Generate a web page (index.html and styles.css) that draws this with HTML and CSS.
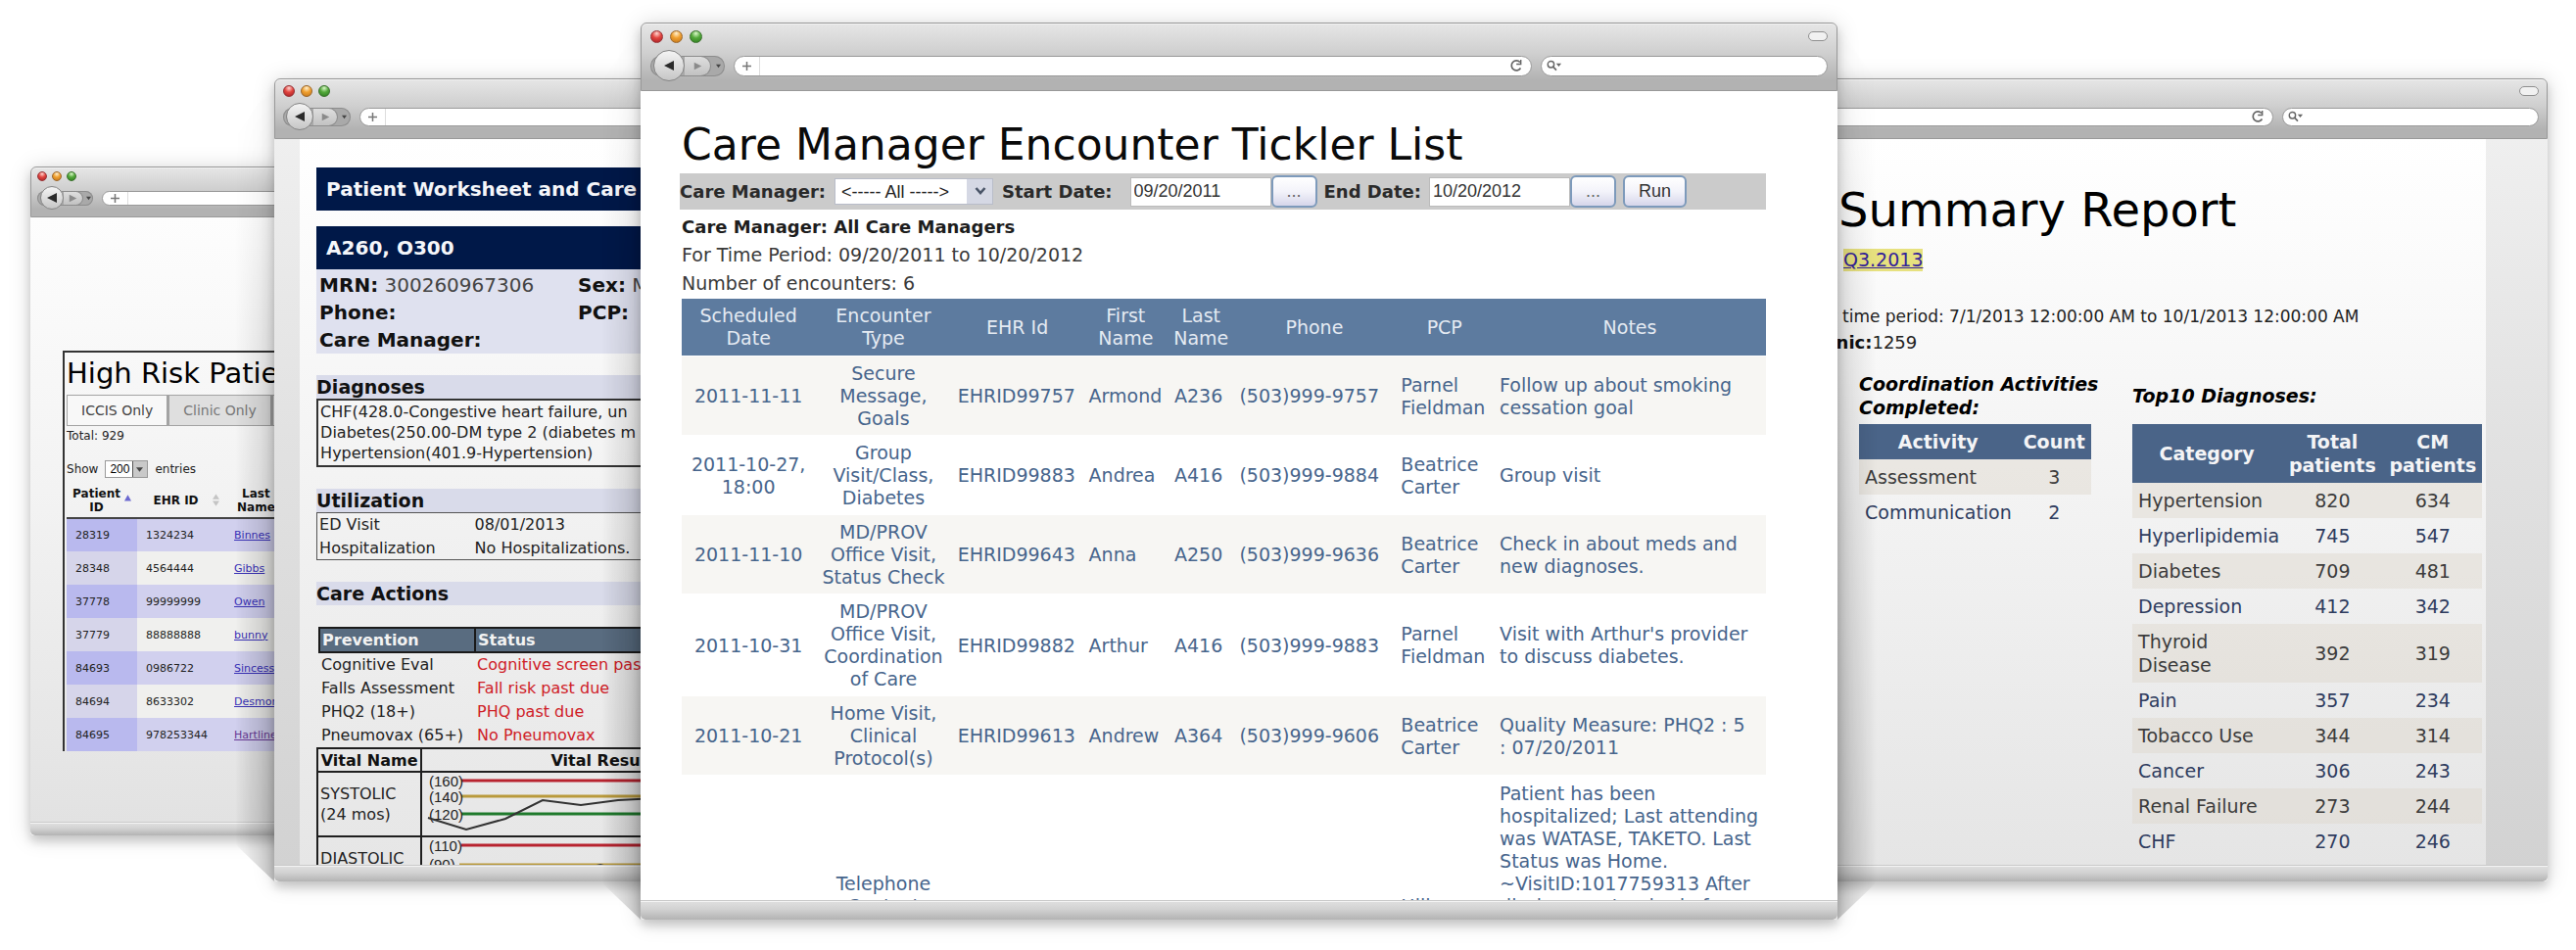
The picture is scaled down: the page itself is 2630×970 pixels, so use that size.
FILE: index.html
```html
<!DOCTYPE html>
<html lang="en">

<head>
    <meta charset="UTF-8">
    <meta name="viewport" content="width=device-width, initial-scale=1.0">
    <title>Care Manager Encounter Tickler List</title>
    <link rel="stylesheet" href="styles.css">
</head>

<body>
    <!-- shared icons -->
    <svg class="defs" aria-hidden="true">
        <symbol id="i-back" viewBox="0 0 12 12"><path d="M11 1v10L1 6z" fill="#2b2b2b"/></symbol>
        <symbol id="i-fwd" viewBox="0 0 12 12"><path d="M1 1v10l10-5z" fill="#8a8a8a"/></symbol>
        <symbol id="i-down" viewBox="0 0 12 12"><path d="M0 2h12L6 10z" fill="#444"/></symbol>
        <symbol id="i-plus" viewBox="0 0 12 12"><path d="M6 0v12M0 6h12" stroke="#777" stroke-width="2" fill="none"/></symbol>
        <symbol id="i-reload" viewBox="0 0 14 14"><path d="M11.500 9.500a5 5 0 1 1-.6-6" stroke="#666" stroke-width="1.700" fill="none"/><path d="M12.400 1v5.200H7.200V4.800H11V1z" fill="#666"/></symbol>
        <symbol id="i-search" viewBox="0 0 18 12"><circle cx="5" cy="4.600" r="3.600" stroke="#666" stroke-width="1.600" fill="none"/><path d="M7.600 7.400l3.600 3.800" stroke="#666" stroke-width="2"/><path d="M11 3.600h6l-3 3.600z" fill="#666"/></symbol>
        <symbol id="i-chev" viewBox="0 0 12 12"><path d="M1.500 3L6 8l4.500-5" stroke="#4a5568" stroke-width="2.600" fill="none"/></symbol>
    </svg>

    <main class="desktop">

        <!-- high risk patients -->
        <section class="window win-risk">
            <header class="chrome">
                <div class="titlebar"><i class="light red"></i><i class="light amber"></i><i class="light green"></i></div>
                <div class="navbar">
                    <div class="nav">
                        <button class="back" aria-label="Back"><svg><use href="#i-back"/></svg></button>
                        <button class="fwd" aria-label="Forward"><svg><use href="#i-fwd"/></svg></button>
                        <button class="drop" aria-label="History"><svg><use href="#i-down"/></svg></button>
                    </div>
                    <div class="field url"><svg class="plus"><use href="#i-plus"/></svg><input type="text" aria-label="Address"></div>
                </div>
            </header>
            <div class="view">
                <div class="risk-box">
                    <h2>High Risk Patients</h2>
                    <div class="tabs">
                        <button class="tab active">ICCIS Only</button>
                        <button class="tab">Clinic Only</button>
                        <button class="tab">All</button>
                    </div>
                    <p class="total">Total: 929</p>
                    <p class="show">
                        <label for="len">Show</label>
                        <span class="pick"><select id="len"><option>200</option></select><svg><use href="#i-down"/></svg></span>
                        entries
                    </p>
                    <table class="risk">
                        <thead>
                            <tr>
                                <th><span>Patient<br>ID</span><svg class="sort" viewBox="0 0 8 14"><path d="M0 8h8L4 1z" fill="#6a68d0"/></svg></th>
                                <th><span>EHR ID</span><svg class="sort both" viewBox="0 0 8 14"><path d="M0 6h8L4 0zM0 8h8l-4 6z" fill="#c4c4c4"/></svg></th>
                                <th><span>Last<br>Name</span></th>
                            </tr>
                        </thead>
                        <tbody>
                            <tr><td>28319</td><td>1324234</td><td><a href="#">Binnes</a></td></tr>
                            <tr><td>28348</td><td>4564444</td><td><a href="#">Gibbs</a></td></tr>
                            <tr><td>37778</td><td>99999999</td><td><a href="#">Owen</a></td></tr>
                            <tr><td>37779</td><td>88888888</td><td><a href="#">bunny</a></td></tr>
                            <tr><td>84693</td><td>0986722</td><td><a href="#">Sincess</a></td></tr>
                            <tr><td>84694</td><td>8633302</td><td><a href="#">Desmond</a></td></tr>
                            <tr><td>84695</td><td>978253344</td><td><a href="#" class="visited">Hartline</a></td></tr>
                        </tbody>
                    </table>
                </div>
            </div>
            <div class="lip"></div>
        </section>

        <!-- patient worksheet -->
        <section class="window win-sheet">
            <header class="chrome">
                <div class="titlebar"><i class="light red"></i><i class="light amber"></i><i class="light green"></i></div>
                <div class="navbar">
                    <div class="nav">
                        <button class="back" aria-label="Back"><svg><use href="#i-back"/></svg></button>
                        <button class="fwd" aria-label="Forward"><svg><use href="#i-fwd"/></svg></button>
                        <button class="drop" aria-label="History"><svg><use href="#i-down"/></svg></button>
                    </div>
                    <div class="field url"><svg class="plus"><use href="#i-plus"/></svg><input type="text" aria-label="Address"></div>
                </div>
            </header>
            <div class="view">
                <div class="sheet">
                    <h2 class="navy">Patient Worksheet and Care Plan</h2>
                    <h2 class="navy">A260, O300</h2>
                    <div class="info">
                        <div><b>MRN:</b> 300260967306</div>
                        <div><b>Sex:</b> M</div>
                        <div><b>Phone:</b></div>
                        <div><b>PCP:</b></div>
                        <div><b>Care Manager:</b></div>
                    </div>

                    <h3>Diagnoses</h3>
                    <div class="dx">
                        <div>CHF(428.0-Congestive heart failure, un</div>
                        <div>Diabetes(250.00-DM type 2 (diabetes m</div>
                        <div>Hypertension(401.9-Hypertension)</div>
                    </div>

                    <h3>Utilization</h3>
                    <table class="util">
                        <tr><td>ED Visit</td><td>08/01/2013</td></tr>
                        <tr><td>Hospitalization</td><td>No Hospitalizations.</td></tr>
                    </table>

                    <h3>Care Actions</h3>
                    <table class="prev">
                        <tr><th>Prevention</th><th>Status</th></tr>
                        <tr><td>Cognitive Eval</td><td>Cognitive screen past due</td></tr>
                        <tr><td>Falls Assessment</td><td>Fall risk past due</td></tr>
                        <tr><td>PHQ2 (18+)</td><td>PHQ past due</td></tr>
                        <tr><td>Pneumovax (65+)</td><td>No Pneumovax</td></tr>
                    </table>

                    <table class="vital">
                        <tr><th>Vital Name</th><th>Vital Results</th></tr>
                        <tr>
                            <td>SYSTOLIC<br>(24 mos)</td>
                            <td>
                                <svg width="376" height="64">
                                    <path d="M40 8H376" stroke="#b8232f" stroke-width="3"/>
                                    <path d="M40 24H376" stroke="#b99a3c" stroke-width="3"/>
                                    <path d="M40 42H376" stroke="#1f7a2c" stroke-width="3"/>
                                    <text x="7" y="14">(160)</text>
                                    <text x="7" y="30">(140)</text>
                                    <text x="7" y="48">(120)</text>
                                    <polyline points="6,46 45,58 85,47 123,28 162,33 200,28 240,26 376,26" fill="none" stroke="#333" stroke-width="2"/>
                                </svg>
                            </td>
                        </tr>
                        <tr>
                            <td>DIASTOLIC<br>(24 mos)</td>
                            <td>
                                <svg width="376" height="64">
                                    <path d="M40 8H376" stroke="#b8232f" stroke-width="3"/>
                                    <path d="M38 28H376" stroke="#b99a3c" stroke-width="3"/>
                                    <text x="7" y="14">(110)</text>
                                    <text x="7" y="33">(90)</text>
                                    <polyline points="150,36 182,28 210,36" fill="none" stroke="#333" stroke-width="2"/>
                                </svg>
                            </td>
                        </tr>
                    </table>
                </div>
            </div>
            <div class="lip"></div>
        </section>

        <!-- summary report -->
        <section class="window win-report">
            <header class="chrome">
                <div class="titlebar"><i class="pill"></i></div>
                <div class="navbar">
                    <div class="field url"><input type="text" aria-label="Address"><svg class="reload"><use href="#i-reload"/></svg></div>
                    <div class="field search"><svg class="glass"><use href="#i-search"/></svg><input type="text" aria-label="Search"></div>
                </div>
            </header>
            <div class="view">
                <div class="report">
                    <h1>Summary Report</h1>
                    <a href="#" class="quarter">Q3.2013</a>
                    <p class="period">For time period: 7/1/2013 12:00:00 AM to 10/1/2013 12:00:00 AM</p>
                    <p class="clinic"><b>Clinic:</b>1259</p>
                    <div class="pair">
                        <div>
                            <h3>Coordination Activities<br>Completed:</h3>
                            <table class="stats activity">
                                <tr><th>Activity</th><th>Count</th></tr>
                                <tr><td>Assessment</td><td>3</td></tr>
                                <tr><td>Communication</td><td>2</td></tr>
                            </table>
                        </div>
                        <div>
                            <h3>Top10 Diagnoses:</h3>
                            <table class="stats top">
                                <tr><th>Category</th><th>Total patients</th><th>CM patients</th></tr>
                                <tr><td>Hypertension</td><td>820</td><td>634</td></tr>
                                <tr><td>Hyperlipidemia</td><td>745</td><td>547</td></tr>
                                <tr><td>Diabetes</td><td>709</td><td>481</td></tr>
                                <tr><td>Depression</td><td>412</td><td>342</td></tr>
                                <tr><td>Thyroid<br>Disease</td><td>392</td><td>319</td></tr>
                                <tr><td>Pain</td><td>357</td><td>234</td></tr>
                                <tr><td>Tobacco Use</td><td>344</td><td>314</td></tr>
                                <tr><td>Cancer</td><td>306</td><td>243</td></tr>
                                <tr><td>Renal Failure</td><td>273</td><td>244</td></tr>
                                <tr><td>CHF</td><td>270</td><td>246</td></tr>
                            </table>
                        </div>
                    </div>
                </div>
            </div>
            <div class="lip"></div>
        </section>

        <!-- tickler list -->
        <section class="window win-tickler">
            <header class="chrome">
                <div class="titlebar"><i class="light red"></i><i class="light amber"></i><i class="light green"></i><i class="pill"></i></div>
                <div class="navbar">
                    <div class="nav">
                        <button class="back" aria-label="Back"><svg><use href="#i-back"/></svg></button>
                        <button class="fwd" aria-label="Forward"><svg><use href="#i-fwd"/></svg></button>
                        <button class="drop" aria-label="History"><svg><use href="#i-down"/></svg></button>
                    </div>
                    <div class="field url"><svg class="plus"><use href="#i-plus"/></svg><input type="text" aria-label="Address"><svg class="reload"><use href="#i-reload"/></svg></div>
                    <div class="field search"><svg class="glass"><use href="#i-search"/></svg><input type="text" aria-label="Search"></div>
                </div>
            </header>
            <div class="view">
                <div class="tickler">
                    <h1>Care Manager Encounter Tickler List</h1>
                    <form class="filters">
                        <label for="cm">Care Manager:</label>
                        <span class="pick"><select id="cm"><option>&lt;----- All -----&gt;</option></select><svg><use href="#i-chev"/></svg></span>
                        <label for="start">Start Date:</label>
                        <div class="date"><input type="text" id="start" value="09/20/2011"><button type="button">...</button></div>
                        <label for="end">End Date:</label>
                        <div class="date"><input type="text" id="end" value="10/20/2012"><button type="button">...</button></div>
                        <button type="button" class="run">Run</button>
                    </form>
                    <div class="summary">
                        <p><b>Care Manager: All Care Managers</b></p>
                        <p>For Time Period: 09/20/2011 to 10/20/2012</p>
                        <p>Number of encounters: 6</p>
                    </div>
                    <table class="encounters">
                        <colgroup>
                            <col class="c-date"><col class="c-type"><col class="c-ehr"><col class="c-first"><col class="c-last"><col class="c-phone"><col class="c-pcp"><col class="c-notes">
                        </colgroup>
                        <thead>
                            <tr><th>Scheduled<br>Date</th><th>Encounter<br>Type</th><th>EHR Id</th><th>First<br>Name</th><th>Last<br>Name</th><th>Phone</th><th>PCP</th><th>Notes</th></tr>
                        </thead>
                        <tbody>
                            <tr><td>2011-11-11</td><td>Secure<br>Message,<br>Goals</td><td>EHRID99757</td><td>Armond</td><td>A236</td><td>(503)999-9757</td><td>Parnel<br>Fieldman</td><td>Follow up about smoking<br>cessation goal</td></tr>
                            <tr><td>2011-10-27,<br>18:00</td><td>Group<br>Visit/Class,<br>Diabetes</td><td>EHRID99883</td><td>Andrea</td><td>A416</td><td>(503)999-9884</td><td>Beatrice<br>Carter</td><td>Group visit</td></tr>
                            <tr><td>2011-11-10</td><td>MD/PROV<br>Office Visit,<br>Status Check</td><td>EHRID99643</td><td>Anna</td><td>A250</td><td>(503)999-9636</td><td>Beatrice<br>Carter</td><td>Check in about meds and<br>new diagnoses.</td></tr>
                            <tr><td>2011-10-31</td><td>MD/PROV<br>Office Visit,<br>Coordination<br>of Care</td><td>EHRID99882</td><td>Arthur</td><td>A416</td><td>(503)999-9883</td><td>Parnel<br>Fieldman</td><td>Visit with Arthur's provider<br>to discuss diabetes.</td></tr>
                            <tr><td>2011-10-21</td><td>Home Visit,<br>Clinical<br>Protocol(s)</td><td>EHRID99613</td><td>Andrew</td><td>A364</td><td>(503)999-9606</td><td>Beatrice<br>Carter</td><td>Quality Measure: PHQ2 : 5<br>: 07/20/2011</td></tr>
                            <tr class="long"><td></td><td><br><br><br><br>Telephone<br>Contact</td><td></td><td></td><td></td><td></td><td><br><br><br><br><br>Hillary</td><td>Patient has been<br>hospitalized; Last attending<br>was WATASE, TAKETO. Last<br>Status was Home.<br>~VisitID:1017759313 After<br>discharge, standard of care</td></tr>
                        </tbody>
                    </table>
                </div>
            </div>
            <div class="lip"></div>
        </section>

    </main>
</body>

</html>
```
FILE: styles.css
```css
* {
    box-sizing: border-box;
}

body {
    margin: 0;
    background: #fff;
    color: #222;
    font-family: "DejaVu Sans", Verdana, sans-serif;
}

h1,
h2,
h3,
p {
    margin: 0;
}

h1,
h2 {
    font-weight: normal;
    white-space: nowrap;
}

table {
    border-collapse: collapse;
}

button,
input,
select {
    margin: 0;
    padding: 0;
    border: 0;
    font-family: inherit;
    appearance: none;
}

.defs {
    position: absolute;
    width: 0;
    height: 0;
}

/* ---------- windows ---------- */
.desktop {
    position: relative;
    height: 100vh;
    min-height: 700px;
    overflow: hidden;
}

.window {
    position: absolute;
    display: flex;
    flex-direction: column;
    border-radius: 6px 6px 4px 4px;
    box-shadow: 0 2px 22px rgba(0, 0, 0, .17), 0 6px 10px rgba(0, 0, 0, .15);
}

.win-risk {
    left: 1.18%;
    width: 17.9%;
    top: 170px;
    bottom: 117px;
    --title-h: 18px;
    --nav-h: 26px;
    --chrome-h: 52px;
    --light: 10px;
    --gap: 5px;
    --side: 6px;
    --nav-w: 57px;
    --field-h: 15px;
    --back: 24px;
    --drop: 10px;
    --lip: 13px;
}

.win-sheet {
    left: 10.65%;
    width: 22.8%;
}

.win-report {
    right: 1.1%;
    width: 33.12%;
}

.win-sheet,
.win-report {
    top: 80px;
    bottom: 70px;
    --title-h: 24px;
    --nav-h: 28px;
    --chrome-h: 62px;
    --light: 12px;
    --gap: 6px;
    --side: 8px;
    --nav-w: 69px;
    --field-h: 19px;
    --back: 28px;
    --drop: 13px;
    --lip: 16px;
}

.win-tickler {
    left: 24.87%;
    width: 46.46%;
    top: 23px;
    bottom: 31px;
    --title-h: 26px;
    --nav-h: 34px;
    --chrome-h: 70px;
    --light: 13px;
    --gap: 7px;
    --side: 9px;
    --nav-w: 76px;
    --field-h: 21px;
    --back: 32px;
    --drop: 14px;
    --lip: 19px;
}

/* shade thrown on the windows behind */
.win-sheet::before,
.win-tickler::before,
.win-tickler::after {
    content: "";
    position: absolute;
    top: 0;
    bottom: 0;
    right: 100%;
    width: 40px;
    background: linear-gradient(to left, rgba(0, 0, 0, .22), rgba(0, 0, 0, .1) 60%, transparent);
    clip-path: polygon(0 60px, 100% 0, 100% 100%, 0 calc(100% - 38px));
    mask-image: linear-gradient(transparent, rgba(0, 0, 0, .4) 30%, #000);
}

.win-tickler::after {
    right: auto;
    left: 100%;
    transform: scaleX(-1);
}

.chrome {
    height: var(--chrome-h);
    flex: none;
    border: 1px solid #999;
    border-radius: 6px 6px 0 0;
    background: linear-gradient(#e6e6e6, #cfcfcf 45%, #b2b2b2 85%, #b2b2b2);
    box-shadow: inset 0 1px 0 #f2f2f2;
}

.titlebar,
.navbar {
    display: flex;
    align-items: center;
    gap: var(--gap);
    padding: 0 var(--side);
}

.titlebar {
    height: var(--title-h);
}

.navbar {
    height: var(--nav-h);
    gap: 9px;
}

.light {
    width: var(--light);
    height: var(--light);
    border-radius: 50%;
}

.red {
    background: radial-gradient(circle at 50% 20%, #ffd5d0, #e2453f 45%, #a31f24);
    border: 1px solid #963236;
}

.amber {
    background: radial-gradient(circle at 50% 20%, #fff0cf, #f0a02f 45%, #c0741c);
    border: 1px solid #9a652a;
}

.green {
    background: radial-gradient(circle at 50% 20%, #d9f7c8, #54a93b 45%, #2d7a1f);
    border: 1px solid #39702c;
}

.pill {
    width: 20px;
    height: 10px;
    margin-left: auto;
    border: 1px solid #8f8f8f;
    border-radius: 5px;
    background: #f1f1f1;
}

.nav {
    display: flex;
    align-items: center;
    width: var(--nav-w);
    height: var(--field-h);
    padding-left: 3px;
    border-radius: 12px;
    background: #a9a9a9;
    box-shadow: inset 0 0 0 1px #8d8d8d;
}

.nav button {
    display: flex;
    align-items: center;
    justify-content: center;
}

.nav .back {
    width: var(--back);
    height: var(--back);
    flex: none;
    border: 1px solid #858585;
    border-radius: 50%;
    background: linear-gradient(#f4f4f4, #c6c6c6);
}

.nav .fwd {
    flex: 1;
    height: 100%;
    border: 1px solid #8d8d8d;
    border-left: 0;
    border-radius: 0 12px 12px 0;
    background: linear-gradient(#dedede, #c2c2c2);
}

.nav .drop {
    width: var(--drop);
    height: 100%;
    background: none;
}

.nav .back svg {
    width: 12px;
    height: 12px;
}

.nav .fwd svg {
    width: 9px;
    height: 9px;
}

.nav .drop svg {
    width: 5px;
    height: 5px;
}

.field {
    display: flex;
    align-items: center;
    height: var(--field-h);
    border: 1px solid #9a9a9a;
    border-radius: 11px;
    background: #fff;
    overflow: hidden;
}

.field input {
    flex: 1;
    min-width: 0;
    height: 100%;
    background: none;
}

.url {
    flex: 1;
}

.search {
    width: 24.4%;
}

.win-report .search {
    width: 30.7%;
}

.plus {
    width: 9px;
    height: 9px;
    margin: 0 8px;
}

.plus + input {
    border-left: 1px solid #ddd;
}

.reload {
    width: 14px;
    height: 14px;
    margin-right: 8px;
}

.glass {
    width: 16px;
    height: 12px;
    margin-left: 5px;
}

.view {
    flex: 1;
    min-height: 0;
    overflow: hidden;
}

.win-risk .view {
    background: linear-gradient(#fdfdfd, #f3f3f3 45%, #e2e2e2);
}

.win-sheet .view,
.win-report .view {
    background: linear-gradient(#efefef, #e2e2e2 40%, #d2d2d2);
}

.win-tickler .view {
    background: #fff;
}

.lip {
    flex: none;
    height: var(--lip);
    border-top: 1px solid #f4f4f4;
    border-radius: 0 0 5px 5px;
    background: linear-gradient(#dedede, #d2d2d2 40%, #b3b3b3);
    box-shadow: 0 -1px 0 #c9c9c9;
}

/* ---------- high risk patients ---------- */
.risk-box {
    margin: 136px 0 0 33px;
    padding-left: 2px;
    border-top: 2px solid #333;
    border-left: 2px solid #333;
    font-size: 12px;
}

.risk-box h2 {
    font-size: 29px;
    line-height: 42px;
    padding-bottom: 1px;
    color: #000;
}

.tabs {
    display: flex;
}

.tab {
    height: 32px;
    padding: 0 14px;
    border: 1px solid #a3a3a3;
    border-right-width: 2px;
    background: #dfdfdf;
    color: #777;
    font-size: 14px;
}

.tab.active {
    background: #f8f8f8;
    color: #444;
}

.total {
    line-height: 20px;
}

.show {
    display: flex;
    align-items: center;
    gap: 7px;
    height: 20px;
    margin-top: 14px;
}

.pick {
    position: relative;
}

.pick svg {
    position: absolute;
    pointer-events: none;
}

.show .pick select {
    width: 44px;
    height: 18px;
    padding-left: 4px;
    border: 1px solid #999;
    background: linear-gradient(to right, #fff 27px, #555 27px, #555 28px, #c9c9c9 28px);
    font: 12px "Liberation Sans", Arial, sans-serif;
    display: block;
}

.show .pick svg {
    width: 7px;
    height: 7px;
    right: 5px;
    top: 6px;
}

.risk {
    width: 100%;
    margin-top: 4px;
    table-layout: fixed;
}

.risk th {
    height: 36px;
    padding: 0;
    border-bottom: 2px solid #444;
    line-height: 14px;
    color: #111;
}

.risk th:nth-child(1) {
    width: 72px;
}

.risk th:nth-child(2) {
    width: 90px;
}

.risk th:nth-child(3) {
    text-align: left;
    padding-left: 12px;
}

.risk th span {
    display: inline-block;
    vertical-align: middle;
    text-align: center;
}

.sort {
    width: 7px;
    height: 13px;
    margin-left: 4px;
    vertical-align: middle;
}

.sort.both {
    margin-left: 14px;
}

.risk th:nth-child(2) span {
    padding-left: 10px;
}

.risk td {
    height: 34px;
    padding: 0 9px;
    background: #f0f0ee;
    font-size: 11px;
}

.risk td:first-child {
    background: #d6d5ea;
}

.risk tr:nth-child(odd) td {
    background: #d1d0ee;
}

.risk tr:nth-child(odd) td:first-child {
    background: #b9b9ee;
}

.risk a {
    color: #3a32b8;
}

.risk a.visited {
    color: #6a3a96;
}

/* ---------- patient worksheet ---------- */
.sheet {
    height: 100%;
    margin: 0 0 0 26px;
    padding: 29px 70px 0 17px;
    background: linear-gradient(#fff, #f2f2f2 50%, #e6e6e6);
    font-size: 16px;
    overflow: hidden;
    white-space: nowrap;
}

.navy {
    height: 44px;
    margin-bottom: 16px;
    padding-left: 10px;
    background: #001848;
    color: #f5f6fa;
    font-size: 20px;
    font-weight: bold;
    line-height: 44px;
}

.navy + .navy {
    margin-bottom: 0;
}

.info {
    display: grid;
    grid-template-columns: 264px 1fr;
    padding: 2px 0 0 3px;
    background: #dfe1ef;
    font-size: 20px;
    line-height: 28px;
    color: #444;
}

.info b {
    color: #111;
}

.sheet h3 {
    margin-top: 22px;
    background: #d9dbea;
    color: #111;
    font-size: 19px;
    line-height: 24px;
}

.dx {
    padding: 1px 2px 2px;
    border: 2px solid #333;
    line-height: 21px;
}

.util {
    width: 100%;
    border: 1px solid #555;
}

.util td {
    height: 24px;
    padding: 0 2px;
}

.util td:first-child,
.prev th:first-child {
    width: 159px;
}

.prev {
    width: 100%;
    margin: 22px 0 1px 2px;
}

.prev th {
    height: 25px;
    padding: 0 2px;
    border: 2px solid #1a1a1a;
    background: #596c80;
    color: #f2f2f2;
    text-align: left;
}

.prev td {
    height: 24px;
    padding: 0 2px;
}

.prev td + td {
    color: #cf2027;
}

.vital {
    width: 100%;
}

.vital th,
.vital td {
    padding: 0 2px;
    border: 2px solid #1f1f1f;
    line-height: 21px;
}

.vital th {
    height: 24px;
    color: #111;
}

.vital td {
    height: 66px;
}

.vital td:first-child {
    width: 106px;
}

.vital td + td {
    padding: 0;
}

.vital svg {
    display: block;
}

.vital text {
    font: 15px "Liberation Sans", Arial, sans-serif;
    fill: #222;
}

/* ---------- summary report ---------- */
.report {
    height: 100%;
    margin-right: 63px;
    padding: 44px 4px 0 119px;
    background: linear-gradient(#fff, #f4f4f4 45%, #e5e5e5);
    overflow: hidden;
}

.report h1 {
    padding-left: 28px;
    color: #000;
    font-size: 48px;
    line-height: 56px;
}

.quarter {
    display: inline-block;
    margin: 12px 0 0 33px;
    background: #e7e17f;
    color: #33229a;
    font-size: 19px;
    line-height: 23px;
}

.period {
    margin-top: 33px;
    font-size: 17px;
    line-height: 26px;
    white-space: nowrap;
}

.clinic {
    font-size: 18px;
    line-height: 28px;
}

.clinic b {
    color: #111;
}

.pair {
    display: grid;
    grid-template-columns: 279fr 357fr;
    padding: 16px 0 0 49px;
}

.report h3 {
    display: flex;
    align-items: center;
    height: 48px;
    margin-bottom: 5px;
    color: #000;
    font-size: 19px;
    font-style: italic;
    line-height: 24px;
    white-space: nowrap;
}

.stats {
    width: 100%;
    font-size: 19px;
    line-height: 24px;
}

.activity {
    width: 85%;
}

.stats th {
    padding: 6px 2px;
    background: #4a6488;
    color: #f4f4f6;
}

.stats td {
    padding: 6px 2px;
    color: #2f3c5e;
    text-align: center;
}

.stats td:first-child {
    padding-left: 6px;
    text-align: left;
}

.top th:first-child {
    width: 42%;
}

.activity th:first-child {
    width: 68%;
}

.stats tr:nth-child(even) td {
    background: rgba(222, 215, 203, .45);
    color: #3c3c3c;
}

/* ---------- tickler list ---------- */
.tickler {
    padding: 29px 73px 0 42px;
}

.tickler h1 {
    color: #0a0a0a;
    font-size: 44px;
    line-height: 52px;
}

.filters {
    display: flex;
    align-items: center;
    height: 37px;
    margin: 3px 0 3px -2px;
    background: #cbcbcb;
    font-size: 18px;
}

.filters label {
    color: #2a2a2a;
    font-weight: bold;
    white-space: nowrap;
}

.filters .pick {
    width: 162px;
    margin: 0 9px;
}

.filters select {
    display: block;
    width: 100%;
    height: 27px;
    padding-left: 6px;
    border: 1px solid #b9bdc9;
    background: linear-gradient(to left, #d5d8e4 26px, #fff 26px);
    color: #222;
    font: 18px "Liberation Sans", Arial, sans-serif;
}

.filters .pick svg {
    width: 12px;
    height: 12px;
    right: 7px;
    top: 7px;
}

.date {
    display: flex;
    align-items: center;
    margin: 0 7px 0 18px;
}

.date:nth-of-type(2) {
    margin-left: 8px;
}

.date input {
    width: 144px;
    height: 30px;
    padding-left: 3px;
    border: 1px solid #bbb;
    background: #fff;
    color: #333;
    font: 18px "Liberation Sans", Arial, sans-serif;
}

.filters button {
    width: 47px;
    height: 33px;
    border: 2px solid #7d9abb;
    border-radius: 6px;
    background: linear-gradient(#fff, #f3f3fa 50%, #d6d6ea);
    color: #666;
    font: 18px "Liberation Sans", Arial, sans-serif;
}

.filters .run {
    width: 65px;
    color: #333;
}

.summary {
    font-size: 19px;
    line-height: 29px;
    color: #3a3a3a;
}

.summary b {
    color: #1d1d1d;
    font-size: 18px;
}

.encounters {
    width: 100%;
    margin-top: 1px;
    table-layout: fixed;
    font-size: 19px;
    line-height: 23px;
}

.c-date {
    width: 12.3%;
}

.c-type {
    width: 12.6%;
}

.c-ehr {
    width: 12.1%;
}

.c-first {
    width: 7.9%;
}

.c-last {
    width: 6%;
}

.c-phone {
    width: 14.9%;
}

.c-pcp {
    width: 9.1%;
}

.encounters th {
    padding: 6px 0;
    background: #5d7b9f;
    color: #e4eaf2;
    font-weight: normal;
}

.encounters td {
    padding: 6px 0 5px 6px;
    border-top: 1px solid #fff;
    color: #47658c;
    white-space: nowrap;
}

.encounters td:nth-child(-n+2) {
    padding-left: 0;
    text-align: center;
}

.encounters tbody tr:nth-child(odd) {
    background: #f7f6f3;
}

.encounters .long td {
    padding-top: 7px;
    vertical-align: top;
}
```
